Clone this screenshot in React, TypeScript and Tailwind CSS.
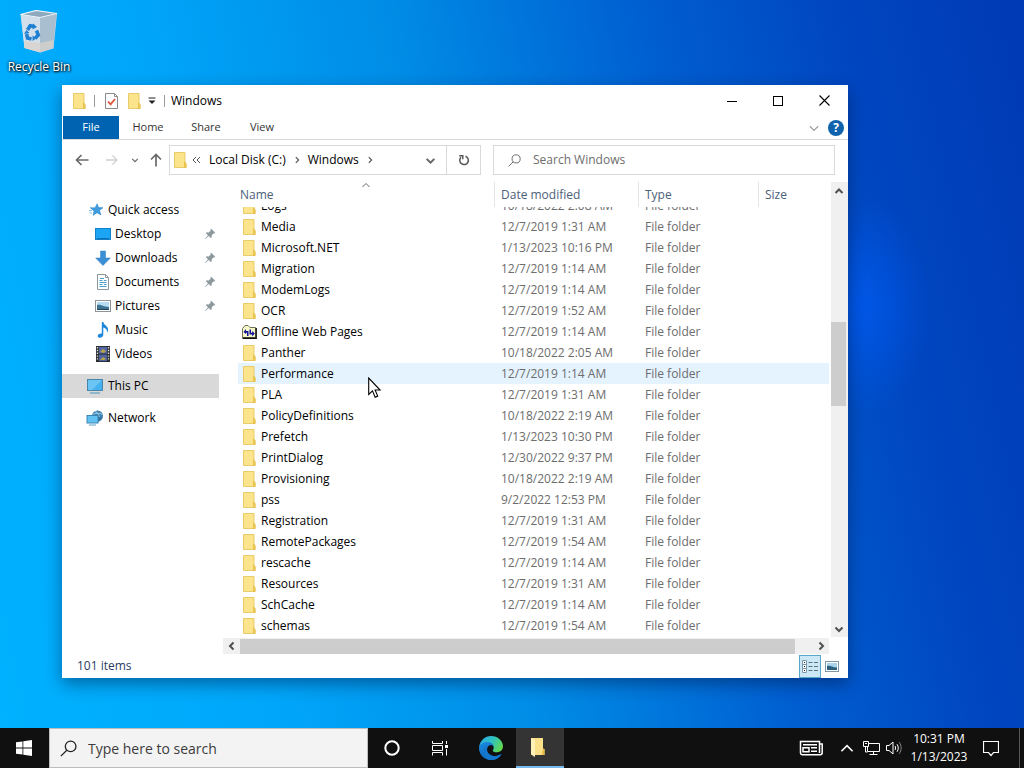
import { useLayoutEffect, useRef, useState } from "react";

type FileRow = {
    name: string;
    date: string;
    kind?: "offline";
}

const rows: FileRow[] = [
    { name: "Logs", date: "10/18/2022 2:08 AM" },
    { name: "Media", date: "12/7/2019 1:31 AM" },
    { name: "Microsoft.NET", date: "1/13/2023 10:16 PM" },
    { name: "Migration", date: "12/7/2019 1:14 AM" },
    { name: "ModemLogs", date: "12/7/2019 1:14 AM" },
    { name: "OCR", date: "12/7/2019 1:52 AM" },
    { name: "Offline Web Pages", date: "12/7/2019 1:14 AM", kind: "offline" },
    { name: "Panther", date: "10/18/2022 2:05 AM" },
    { name: "Performance", date: "12/7/2019 1:14 AM" },
    { name: "PLA", date: "12/7/2019 1:31 AM" },
    { name: "PolicyDefinitions", date: "10/18/2022 2:19 AM" },
    { name: "Prefetch", date: "1/13/2023 10:30 PM" },
    { name: "PrintDialog", date: "12/30/2022 9:37 PM" },
    { name: "Provisioning", date: "10/18/2022 2:19 AM" },
    { name: "pss", date: "9/2/2022 12:53 PM" },
    { name: "Registration", date: "12/7/2019 1:31 AM" },
    { name: "RemotePackages", date: "12/7/2019 1:54 AM" },
    { name: "rescache", date: "12/7/2019 1:14 AM" },
    { name: "Resources", date: "12/7/2019 1:31 AM" },
    { name: "SchCache", date: "12/7/2019 1:14 AM" },
    { name: "schemas", date: "12/7/2019 1:54 AM" },
];

/* ---------- Icons ---------- */

const FolderIcon = () => (
    <svg width="16" height="16" viewBox="0 0 16 16" className="shrink-0">
        <path d="M2.5.5h10.500v10.600l1 .9v3.500H2.500z" fill="#fbe48c" stroke="#e9cb68" />
        <path d="M12.500 10v5.500h1.600v-4.300z" fill="#f5d063" stroke="#e3b93f" strokeWidth=".7" />
    </svg>
);

const OfflineIcon = () => (
    <svg width="16" height="16" viewBox="0 0 16 16" className="shrink-0">
        <path d="M1.500 13.500V4.500L4 1.500h3l2 2h5.500v10z" fill="#f7f8c8" stroke="#6f7055" />
        <path d="M15.200 4v10.300H1.500" fill="none" stroke="#111" strokeWidth="1.400" />
        <path d="M2.500 8L5 5v2h2.500v5H6V8.800H5V10z" fill="#10109c" />
        <path d="M13.800 9.500l-2.600 3v-2H8.500v-5H10v3.300h1.200V7z" fill="#10109c" />
    </svg>
);

const CheckPageIcon = () => (
    <svg width="16" height="18" viewBox="0 0 16 18">
        <path d="M2.500 1.500h9l3 3v12h-12z" fill="#fdfdfd" stroke="#8a8a8a" />
        <path d="M11.500 1.500v3h3" fill="none" stroke="#8a8a8a" />
        <path d="M5 9.500l2.600 2.800L12 7" fill="none" stroke="#e0563a" strokeWidth="1.800" />
    </svg>
);

const StarIcon = () => (
    <svg width="16" height="16" viewBox="0 0 16 16">
        <path d="M9.200 1.800l1.300 3.800 4.500.1-3.500 2.800 1.400 4.400-3.800-2.200-4 2.600 1-4.400L2.500 6l4.600-.3z" fill="#3f9ddf" stroke="#2f86c8" strokeWidth=".6" />
        <path d="M1 8.500h3M1.500 11h2.500M2 5.500h2" stroke="#7fbfea" />
    </svg>
);

const DesktopIcon = () => (
    <svg width="16" height="16" viewBox="0 0 16 16">
        <rect x=".5" y="2.500" width="15" height="11" fill="#1da5f5" stroke="#1283c9" />
        <path d="M2 12.500h12" stroke="#0c6fb0" />
    </svg>
);

const DownloadIcon = () => (
    <svg width="16" height="16" viewBox="0 0 16 16">
        <path d="M5.500 1h5v7h4.800L8 15.500.7 8h4.800z" fill="#3c8fd4" stroke="#2c7cc0" strokeWidth=".5" />
    </svg>
);

const DocumentIcon = () => (
    <svg width="16" height="16" viewBox="0 0 16 16">
        <path d="M2.500.5h8l3 3v12h-11z" fill="#fcfdfe" stroke="#8c979e" />
        <path d="M10.500.5v3h3" fill="none" stroke="#8c979e" />
        <path d="M5 4.500h4M4.500 6.500h3M9 6.500h2.500M4.500 8.500h7M4.500 10.500h3M9 10.500h2.500M4.500 12.500h7" stroke="#4a9ccc" />
    </svg>
);

const PictureIcon = () => (
    <svg width="16" height="16" viewBox="0 0 16 16">
        <rect x=".5" y="2.500" width="15" height="11" fill="#fff" stroke="#8f9499" />
        <rect x="2" y="4" width="12" height="8" fill="#b6dcf4" />
        <path d="M2 7c4-1 6 2 12 2v3H2z" fill="#3e7392" />
        <path d="M2 11h12v1H2z" fill="#24465c" />
    </svg>
);

const MusicIcon = () => (
    <svg width="16" height="16" viewBox="0 0 16 16">
        <path d="M6.800 0h1.500c.4 3 4.800 4 4.800 7.600 0 1.300-.5 2.200-1.100 3 .4-3-1.200-4.200-3.700-5v7.200c0 1.700-1.500 2.900-3.300 2.900-1.300 0-2.300-.7-2.300-1.800 0-1.500 1.600-2.700 4.100-2.500z" fill="#1e88dc" />
    </svg>
);

const VideoIcon = () => (
    <svg width="16" height="16" viewBox="0 0 16 16">
        <rect x="1" y="0" width="14" height="16" fill="#2a2d30" />
        <rect x="4" y="1" width="8" height="6.500" fill="#5367a8" />
        <rect x="4" y="8.500" width="8" height="6.500" fill="#4f63a0" />
        <path d="M5 6l3-3 3 2-2 2zM5 14l3-3 3 2-2 1z" fill="#b7a548" />
        <path d="M2.500 1v14M13.500 1v14" stroke="#d7dadd" strokeWidth="1.400" strokeDasharray="1.400 1.400" />
    </svg>
);

const PcIcon = () => (
    <svg width="18" height="16" viewBox="0 0 18 16">
        <rect x="1.500" y="1.500" width="15" height="11" fill="#45b1ee" stroke="#4a86ab" />
        <path d="M2 2h14L6 12H2z" fill="#7accf6" opacity=".7" />
        <path d="M4 15h10" stroke="#5f9fc4" strokeWidth="1.200" />
    </svg>
);

const NetworkIcon = () => (
    <svg width="18" height="16" viewBox="0 0 18 16">
        <circle cx="11.500" cy="6" r="5.500" fill="#3f80ae" />
        <path d="M9 1.500c3 1 5 4 4.500 9M7 4c4-1 7-1 9.500.5" stroke="#a9d6ef" strokeWidth=".9" fill="none" />
        <path d="M12 6.500l4.500 1.500-4.500 4z" fill="#356f9a" />
        <rect x="1" y="5.500" width="11" height="7.500" fill="#62c2f3" stroke="#3b86b4" />
        <path d="M3 15h7" stroke="#5f9fc4" />
    </svg>
);

const PinIcon = () => (
    <svg width="12" height="12" viewBox="0 0 12 12">
        <path d="M7.200.8l4 4-1 .8-.7-.2L7.700 7.300l.1 2-1 .8L4.700 8 1 11.200.8 11 4 7.300 1.900 5.200l.8-.9 2.100.1 1.900-1.900-.3-.8z" fill="#8d979e" />
    </svg>
);

const RecycleBinIcon = () => (
    <svg width="40" height="44" viewBox="0 0 40 44">
        <path d="M1.500 4.500L17 .5l21 3-3.500 35L21 42.500 5.500 38z" fill="#c9d9e6" />
        <path d="M1.500 4.500L17 .5l21 3-17 4z" fill="#8ea9bd" stroke="#eef5fa" strokeWidth="1.200" />
        <path d="M2 5l19 3v34L5.500 38z" fill="#d3e0eb" />
        <path d="M21 8l16.500-4-3.300 34L21 42z" fill="#a9bfd0" />
        <path d="M5 31l16 2 13.700-3-.6 8L21 42.500 5.500 38z" fill="#d9d2c9" opacity=".75" />
        <g fill="none" stroke="#1f7fd0" strokeWidth="3.600">
            <path d="M8.500 20l2.700-4.300 4 .8" />
            <path d="M17.500 20.500l1.800 4.500-3.300 3.500" />
            <path d="M12.500 29l-4-1-.9-4" />
        </g>
        <path d="M14 13.500l4 3.500-4.500 2.500zM13.500 25.500v5.500l3.500-2.500zM5 24l2.500-4 3 3z" fill="#1f7fd0" />
    </svg>
);

const EdgeIcon = () => (
    <svg width="24" height="24" viewBox="0 0 24 24">
        <defs>
            <linearGradient id="edgeTop" x1="0" y1="0.2" x2="1" y2="0.6">
                <stop offset="0" stopColor="#2aa7e8" />
                <stop offset=".5" stopColor="#2fc3c0" />
                <stop offset="1" stopColor="#62d84e" />
            </linearGradient>
            <linearGradient id="edgeBody" x1="0" y1="0" x2=".6" y2="1">
                <stop offset="0" stopColor="#1b8fe0" />
                <stop offset="1" stopColor="#0f5cb8" />
            </linearGradient>
        </defs>
        <path d="M.1 11C1 4.500 6 0 12 0c7 0 12 5 12 10.300 0 3.700-2.800 6-6.200 6-2.800 0-4-1-4-1.900 0-.7.900-1 .9-2.900 0-2.600-2.300-4.600-5.300-4.600C4.500 6.900 1 9.500.1 11z" fill="url(#edgeTop)" />
        <path d="M0 12c0-3.500 4-6 8.500-6C12.500 6 14.700 8.500 14.700 11c0-1-1.300-2-2.900-2C9.500 9 8 11.300 8 13.500c0 4 3.600 6.500 7.500 6.500 2.500 0 4.500-.6 6.300-1.800.4-.2.700.1.400.5C20 22 16.500 24 12 24 5 24 0 18.500 0 12z" fill="url(#edgeBody)" />
        <path d="M9.500 23.700C5.500 22 3.800 18.500 4 15.500 4.200 12 6.500 9.500 9.500 9.500 8.600 10.500 8 12 8 13.500c0 4 3.600 6.500 7.500 6.500 2.500 0 4.500-.6 6.300-1.800.4-.2.700.1.400.5C19.500 22.800 14.500 24.800 9.500 23.700z" fill="#1378cd" />
    </svg>
);

type ChevronProps = {
    dir: "up" | "down" | "left" | "right";
    size?: number;
    stroke?: number;
    className?: string;
}

const chevronPath = {
    up: "M1.500 7l3.500-3.500L8.500 7",
    down: "M1.500 3.500L5 7l3.500-3.500",
    left: "M6.500 1.500L3 5l3.500 3.500",
    right: "M3.500 1.500L7 5 3.500 8.500",
};

const Chevron = ({ dir, size = 10, stroke = 1.5, className = "" }: ChevronProps) => (
    <svg width={size} height={size} viewBox="0 0 10 10" className={className}>
        <path d={chevronPath[dir]} fill="none" stroke="currentColor" strokeWidth={stroke} />
    </svg>
);

const Magnifier = ({ size }: { size: number }) => (
    <svg width={size} height={size} viewBox="0 0 16 16" className="shrink-0">
        <circle cx="10" cy="6" r="5" fill="none" stroke="currentColor" strokeWidth="1.200" />
        <path d="M6.400 9.600L.8 15.200" stroke="currentColor" strokeWidth="1.200" />
    </svg>
);

/* ---------- Explorer window ---------- */

const TitleBar = () => (
    <div className="flex h-[31px] shrink-0 items-center justify-between">
        <div className="flex items-center pl-[9px]">
            <FolderIcon />
            <span className="ml-[7px] h-3 w-px bg-[#9a9a9a]" />
            <button aria-label="Properties" className="ml-2"><CheckPageIcon /></button>
            <button aria-label="New folder" className="ml-[7px]"><FolderIcon /></button>
            <button aria-label="Customize Quick Access Toolbar" className="ml-1.5">
                <svg width="8" height="8" viewBox="0 0 8 8">
                    <path d="M.5 1h7" stroke="#222" />
                    <path d="M.5 3.500h7L4 7z" fill="#222" />
                </svg>
            </button>
            <span className="ml-2 h-3 w-px bg-[#9a9a9a]" />
            <h1 className="ml-1.5 text-[12px] text-black">Windows</h1>
        </div>
        <div className="flex h-full pr-px">
            <button aria-label="Minimize" className="flex w-[46px] items-center justify-center">
                <svg width="10" height="10" viewBox="0 0 10 10"><path d="M0 5.500h10" stroke="#000" /></svg>
            </button>
            <button aria-label="Maximize" className="flex w-[46px] items-center justify-center">
                <svg width="10" height="10" viewBox="0 0 10 10"><rect x=".5" y=".5" width="9" height="9" fill="none" stroke="#000" /></svg>
            </button>
            <button aria-label="Close" className="flex w-[46px] items-center justify-center">
                <svg width="11" height="11" viewBox="0 0 11 11"><path d="M.5.500l10 10M10.500.5l-10 10" stroke="#000" strokeWidth="1.100" /></svg>
            </button>
        </div>
    </div>
);

const Ribbon = () => (
    <div className="flex h-6 shrink-0 items-stretch justify-between border-b border-[#dadbdc] text-[11px] text-[#333]">
        <div className="flex pl-px">
            <button className="w-14 bg-[#0063b1] text-white">File</button>
            <button className="w-[58px]">Home</button>
            <button className="w-[58px]">Share</button>
            <button className="w-[54px]">View</button>
        </div>
        <div className="flex items-center gap-2 pr-1">
            <button aria-label="Expand the Ribbon" className="text-[#a0a0a0]"><Chevron dir="down" size={12} stroke={1.1} /></button>
            <button aria-label="Help" className="flex h-4 w-4 items-center justify-center rounded-full bg-[#0f63ad] text-[12px] font-bold text-white">?</button>
        </div>
    </div>
);

const AddressBar = () => (
    <div className="flex h-10 shrink-0 items-center pr-[13px] text-[12px] text-black">
        <div className="flex w-[107px] shrink-0 items-center pl-[13px] text-[#6a6a6a]">
            <button aria-label="Back">
                <svg width="14" height="12" viewBox="0 0 14 12"><path d="M6.500 1L1.500 6l5 5M1.500 6h12" fill="none" stroke="currentColor" strokeWidth="1.700" /></svg>
            </button>
            <button aria-label="Forward" className="ml-4 text-[#d0d0d0]">
                <svg width="14" height="12" viewBox="0 0 14 12"><path d="M7.500 1.500L12 6l-4.500 4.500M12 6H1" fill="none" stroke="currentColor" strokeWidth="1.300" /></svg>
            </button>
            <button aria-label="Recent locations" className="ml-3"><Chevron dir="down" size={8} /></button>
            <button aria-label="Up" className="ml-[11px]">
                <svg width="12" height="14" viewBox="0 0 12 14"><path d="M1 6.500l5-5 5 5M6 1.500v12" fill="none" stroke="currentColor" strokeWidth="1.700" /></svg>
            </button>
        </div>
        <div className="flex h-[30px] flex-[310] border border-[#d9d9d9]">
            <div className="flex flex-1 items-center pl-[2px]">
                <FolderIcon />
                <button aria-label="More locations" className="ml-1 text-[#555]">
                    <svg width="9" height="8" viewBox="0 0 9 8"><path d="M4 1L1 4l3 3M8 1L5 4l3 3" fill="none" stroke="currentColor" /></svg>
                </button>
                <button className="ml-2">Local Disk (C:)</button>
                <Chevron dir="right" size={8} className="mx-[7px] text-[#555]" />
                <button>Windows</button>
                <Chevron dir="right" size={8} className="ml-[7px] text-[#555]" />
                <button aria-label="Previous locations" className="mr-2.5 ml-auto text-[#666]"><Chevron dir="down" size={11} stroke={1.8} /></button>
            </div>
            <button aria-label="Refresh" className="flex w-[34px] items-center justify-center border-l border-[#d9d9d9] text-[#555]">
                <svg width="12" height="12" viewBox="0 0 12 12">
                    <path d="M7.500 2.200A4.300 4.300 0 1 1 3 3.200" fill="none" stroke="currentColor" strokeWidth="1.500" />
                    <path d="M1.200 1.700h3.600v3.600" fill="none" stroke="currentColor" strokeWidth="1.400" />
                </svg>
            </button>
        </div>
        <label className="ml-3 flex h-[30px] flex-[326] items-center border border-[#d9d9d9] pl-3.5 text-[#6d6d6d]">
            <Magnifier size={13} />
            <input type="search" aria-label="Search Windows" placeholder="Search Windows" className="ml-3 min-w-0 flex-1 outline-none placeholder:text-[#6d6d6d]" />
        </label>
    </div>
);

const quickLinks = [
    { label: "Desktop", icon: <DesktopIcon />, pinned: true },
    { label: "Downloads", icon: <DownloadIcon />, pinned: true },
    { label: "Documents", icon: <DocumentIcon />, pinned: true },
    { label: "Pictures", icon: <PictureIcon />, pinned: true },
    { label: "Music", icon: <MusicIcon />, pinned: false },
    { label: "Videos", icon: <VideoIcon />, pinned: false },
];

const Sidebar = () => (
    <nav className="flex w-[157px] shrink-0 flex-col gap-2 pt-[18px] text-[12px] text-black">
        <div>
            <a href="#quick" className="flex h-6 items-center gap-1 pl-[26px]"><StarIcon />Quick access</a>
            {quickLinks.map((link) => (
                <a key={link.label} href="#folder" className="flex h-6 items-center pr-[3px] pl-[33px]">
                    {link.icon}
                    <span className="ml-1 flex-1">{link.label}</span>
                    {link.pinned ? <PinIcon /> : <></>}
                </a>
            ))}
        </div>
        <a href="#pc" className="flex h-6 items-center gap-1 bg-[#d9d9d9] pl-6"><PcIcon />This PC</a>
        <a href="#network" className="flex h-6 items-center gap-1 pl-6"><NetworkIcon />Network</a>
    </nav>
);

const FileList = () => {

    const listRef = useRef<HTMLTableSectionElement>(null);
    const [ hovered, setHovered ] = useState<string>("Performance");

    // the list opens scrolled part of the way into a row
    useLayoutEffect(() => {
        if (listRef.current) listRef.current.scrollTop = 12;
    }, []);

    return (
        <table className="flex min-w-0 flex-1 flex-col pr-0.5 pb-px pl-[15px] text-left text-[12px] whitespace-nowrap text-[#6d6d6d]">
            <thead className="block shrink-0 pt-0.5 text-[#4c607a]">
                <tr className="flex h-[25px] leading-[25px]">
                    <th className="relative flex-1 pl-0.5 font-normal">
                        <span className="absolute top-0 left-1/2 -translate-x-1/2 text-[#666]"><Chevron dir="up" stroke={1} className="-mt-0.5" /></span>
                        Name
                    </th>
                    <th className="w-36 border-l border-[#e5e5e5] pl-1.5 font-normal">Date modified</th>
                    <th className="w-[120px] border-l border-[#e5e5e5] pl-1.5 font-normal">Type</th>
                    <th className="w-[71px] border-l border-[#e5e5e5] pl-1.5 font-normal">Size</th>
                </tr>
            </thead>
            <tbody ref={listRef} className="block min-h-0 flex-1 overflow-auto [scrollbar-width:none]">
                {rows.map((row) => (
                    <tr key={row.name} onMouseEnter={() => setHovered(row.name)} className={row.name === hovered ? "flex h-[21px] bg-[#e5f3ff] leading-[21px]" : "flex h-[21px] leading-[21px]"}>
                        <td className="flex flex-1 items-center gap-1 pl-[3px] text-black">
                            {row.kind === "offline" ? <OfflineIcon /> : <FolderIcon />}
                            {row.name}
                        </td>
                        <td className="w-36 pl-[7px]">{row.date}</td>
                        <td className="w-[120px] pl-[7px]">File folder</td>
                        <td className="w-[71px]"></td>
                    </tr>
                ))}
            </tbody>
        </table>
    );
};

const ExplorerWindow = () => (
    <section className="absolute top-[85px] right-44 bottom-[50px] left-[62px] flex flex-col bg-white shadow-[0_6px_16px_rgba(0,20,60,0.45)]">
        <TitleBar />
        <Ribbon />
        <AddressBar />
        <div className="flex min-h-0 flex-1">
            <Sidebar />
            <div className="ml-1 flex min-w-0 flex-1 flex-col">
                <div className="flex min-h-0 flex-1">
                    <FileList />
                    <div className="mt-0.5 flex w-[17px] flex-col items-center bg-[#f0f0f0] pr-0.5 text-[#505050]">
                        <button aria-label="Scroll up" className="flex h-[17px] items-center"><Chevron dir="up" stroke={2} /></button>
                        <div className="flex-[123]" />
                        <div className="w-[15px] flex-[84] bg-[#cdcdcd]" />
                        <div className="flex-[214]" />
                        <button aria-label="Scroll down" className="flex h-[17px] items-center"><Chevron dir="down" stroke={2} /></button>
                    </div>
                </div>
                <div className="mt-px mr-[19px] flex h-4 shrink-0 items-center bg-[#f0f0f0] text-[#505050]">
                    <button aria-label="Scroll left" className="flex w-[17px] justify-center"><Chevron dir="left" stroke={2} /></button>
                    <div className="h-[15px] flex-[556] bg-[#cdcdcd]" />
                    <div className="flex-[17]" />
                    <button aria-label="Scroll right" className="flex w-[17px] justify-center"><Chevron dir="right" stroke={2} /></button>
                </div>
            </div>
        </div>
        <footer className="flex h-6 shrink-0 items-center justify-between pr-[9px] pl-[15px] text-[12px] text-[#2a3a62]">
            <span>101 items</span>
            <div className="flex items-center gap-1">
                <button aria-label="Details view" className="flex h-[23px] w-[22px] items-center justify-center border border-[#5aa7c9] bg-[#cce8f6]">
                    <svg width="16" height="13" viewBox="0 0 16 13">
                        <path d="M.5.500h4v12h-4zM.5 4.500h4M.5 8.500h4" fill="#f6fbfe" stroke="#7d98a8" />
                        <path d="M2 2.500h1M2 6.500h1M2 10.500h1" stroke="#222" />
                        <path d="M6.500 2.500h4M12 2.500h4M6.500 6.500h4M12 6.500h4M6.500 10.500h4M12 10.500h4" stroke="#5c7482" />
                    </svg>
                </button>
                <button aria-label="Large thumbnails view" className="flex items-center">
                    <svg width="14" height="11" viewBox="0 0 14 11">
                        <rect x=".5" y=".5" width="13" height="10" fill="#fff" stroke="#7f97a6" />
                        <rect x="2" y="2" width="10" height="7" fill="#a9d3ea" />
                        <path d="M2 5c3-1 5 1.500 10 1.500V9H2z" fill="#2c5f7c" />
                    </svg>
                </button>
            </div>
        </footer>
    </section>
);

/* ---------- Taskbar ---------- */

const Taskbar = () => (
    <footer className="flex h-10 shrink-0 items-stretch bg-[#101010] text-white">
        <button aria-label="Start" className="flex w-12 items-center justify-center">
            <svg width="16" height="16" viewBox="0 0 16 16" fill="#fff">
                <path d="M0 2.300l6.500-.9v6.200H0zM7.300 1.300L16 0v7.600H7.300zM0 8.400h6.500v6.200L0 13.700zM7.300 8.400H16V16l-8.700-1.300z" />
            </svg>
        </button>
        <label className="ml-px flex w-[319px] items-center border border-[#bdbdbd] bg-[#f3f3f3] pl-2.5 text-[#222]">
            <Magnifier size={17} />
            <input type="search" aria-label="Type here to search" placeholder="Type here to search" className="ml-[11px] min-w-0 flex-1 text-[14px] outline-none placeholder:text-[#3c3c3c]" />
        </label>
        <button aria-label="Cortana" className="flex w-12 items-center justify-center">
            <svg width="16" height="16" viewBox="0 0 16 16"><circle cx="8" cy="8" r="6.700" fill="none" stroke="#fff" strokeWidth="2" /></svg>
        </button>
        <button aria-label="Task View" className="flex w-12 items-center justify-center">
            <svg width="16" height="16" viewBox="0 0 16 16" fill="none" stroke="#fff">
                <path d="M.5 1v2.500h10V1M.5 15.500V12.500h10v3M.5 5.500h10v5H.5zM14.500 1v3M14.500 9v6.500" />
                <path d="M13 6.500h3" strokeWidth="3" />
            </svg>
        </button>
        <button aria-label="Microsoft Edge" className="ml-[3px] flex w-12 items-center justify-center"><EdgeIcon /></button>
        <button aria-label="File Explorer" className="ml-px flex w-12 items-center justify-center border-b-2 border-[#76b9ed] bg-[#343434] pr-1">
            <svg width="16" height="20" viewBox="0 0 16 20">
                <path d="M1 1h12v11h1.500v6H3z" fill="#fbe08a" />
                <path d="M1 1l4 2v17l-4-2.500z" fill="#fff0b8" />
                <path d="M13 11l1.500 1.500V18H12z" fill="#e7b93f" />
            </svg>
        </button>
        <div className="ml-auto flex items-center">
            <button aria-label="News and interests">
                <svg width="24" height="16" viewBox="0 0 24 16" fill="none" stroke="#fff" strokeWidth="1.500">
                    <path d="M20.500 13V1.500h-19v11.500c0 1 .7 1.700 1.700 1.700h18c1.200 0 2-.8 2-1.900V4h-2.700" />
                    <path d="M4 4.700h14M4 7.800h6v4H4zM12 7.800h6M12 11.300h6" />
                </svg>
            </button>
            <button aria-label="Show hidden icons" className="ml-4"><Chevron dir="up" size={16} stroke={1} /></button>
            <button aria-label="Network" className="ml-2">
                <svg width="17" height="15" viewBox="0 0 17 15" fill="none" stroke="#fff">
                    <path d="M6 2.500h10.500v8H4.500V6M10.500 10.500v3M6.500 13.500h8" />
                    <path d="M.5.500h5v5h-5zM2.500 5.500v5.500h2M2 2.500h2" />
                </svg>
            </button>
            <button aria-label="Volume" className="ml-1.5">
                <svg width="17" height="14" viewBox="0 0 17 14" fill="none" stroke="#fff">
                    <path d="M.5 4.500h2.500L7 1v12L3 9.500H.5z" />
                    <path d="M9 5c.8 1.200.8 2.800 0 4M11 3.200c1.700 2.300 1.700 5.300 0 7.600" />
                    <path d="M13.200 1.200c2.600 3.600 2.600 8 0 11.600" stroke="#888" />
                </svg>
            </button>
            <div className="ml-1 flex w-16 flex-col items-center text-[12px] leading-[18px]">
                <span>10:31 PM</span>
                <span>1/13/2023</span>
            </div>
            <button aria-label="Notifications" className="ml-3">
                <svg width="16" height="17" viewBox="0 0 16 17"><path d="M.5 1.500h15v11h-5L8 15.500l-2.500-3h-5z" fill="none" stroke="#fff" strokeWidth="1.200" /></svg>
            </button>
            <button aria-label="Show desktop" className="ml-5 h-10 w-[5px] border-l border-[#555]" />
        </div>
    </footer>
);

const App: React.FC = () => {
    return (
        <div className="flex h-screen flex-col overflow-hidden font-['Open_Sans','Noto_Sans',sans-serif]">
            <main className="relative flex-1 bg-[radial-gradient(ellipse_70px_110px_at_84%_42%,rgba(0,90,240,0.8)_0%,rgba(0,80,220,0)_100%),linear-gradient(78deg,#00b2ff_0%,#00a6fa_24%,#008ce6_46%,#005ed0_68%,#0046c0_84%,#003ab4_100%)]">
                <button className="absolute top-2.5 left-0 flex w-[78px] flex-col items-center gap-[5px]">
                    <RecycleBinIcon />
                    <span className="text-[12px] leading-4 text-white [text-shadow:1px_1px_2px_#000,0_0_3px_#000]">Recycle Bin</span>
                </button>
                <ExplorerWindow />
                {/* mouse pointer */}
                <svg width="14" height="22" viewBox="0 0 14 22" className="pointer-events-none absolute top-[377px] left-[368px]">
                    <path d="M.7 1v16.500l3.800-3.600 2.600 6.300 2.600-1.100-2.600-6.100h5z" fill="#fff" stroke="#000" strokeWidth="1.100" />
                </svg>
            </main>
            <Taskbar />
        </div>
    );
};

export default App;
